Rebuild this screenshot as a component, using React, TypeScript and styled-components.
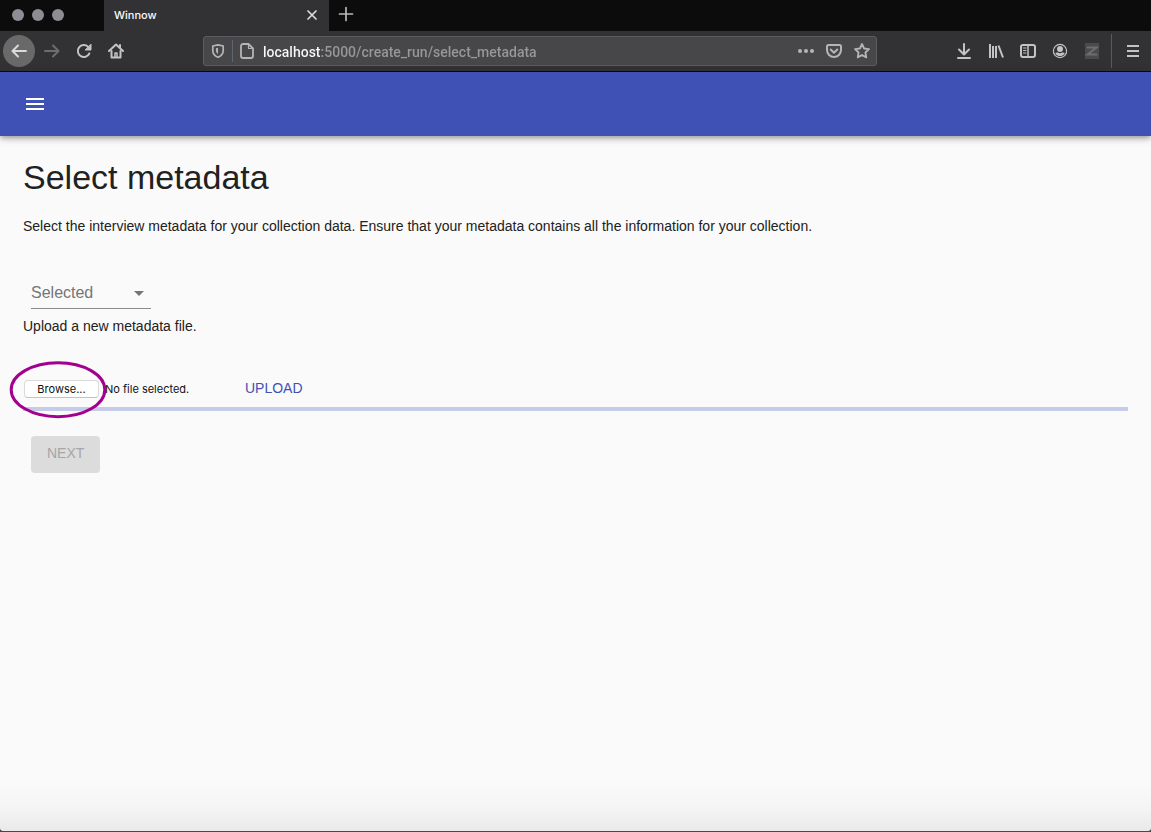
import React, { useRef, useState } from "react";
import styled, { createGlobalStyle } from "styled-components";

const uiFont = `Inter, "Liberation Sans", sans-serif`;
const pageFont = `"Liberation Sans", Arial, sans-serif`;

const GlobalStyle = createGlobalStyle`
  *, *::before, *::after { box-sizing: border-box; }
  body { margin: 0; background: #3a3935; font-family: ${pageFont}; }
  button, input, select { font: inherit; }
  button { border: 0; padding: 0; background: none; color: inherit; cursor: pointer; }
`;

const Window = styled.div`
  min-height: 100vh;
  display: flex;
  flex-direction: column;
  border-bottom: 1px solid #4a4845;
`;

const TabStrip = styled.header`
  display: flex;
  height: 31px;
  background: #0c0c0d;
  color: #f9f9fa;
  font-family: ${uiFont};
`;

const WindowControls = styled.div`
  display: flex;
  align-items: center;
  gap: 8px;
  width: 104px;
  padding: 0 0 2px 12px;
`;

const ControlDot = styled.button`
  width: 12px;
  height: 12px;
  border-radius: 50%;
  background: #8f8d93;
`;

const Tab = styled.div`
  display: flex;
  align-items: center;
  justify-content: space-between;
  width: 225px;
  padding: 0 9px 2px 10px;
  background: #323234;
  font-size: 11px;
  font-weight: 500;
`;

const TabButton = styled.button`
  display: flex;
  align-items: center;
  justify-content: center;
  width: 16px;
  color: #dcdcde;
`;

const NewTabButton = styled(TabButton)`
  width: 34px;
  padding-bottom: 3px;
  color: #b9b9bb;
`;

const Toolbar = styled.nav`
  display: flex;
  align-items: center;
  height: 41px;
  padding: 0 2px 0 3px;
  border-bottom: 1px solid #0c0c0d;
  background: #323234;
  color: #c3c3c5;
`;

const ToolGroup = styled.div`
  display: flex;
  align-items: center;
  flex: none;
`;

const ToolButton = styled.button<{ $dim?: boolean }>`
  display: flex;
  align-items: center;
  justify-content: center;
  width: 32px;
  height: 32px;
  color: ${(p) => (p.$dim ? "#6d6d6f" : "inherit")};
`;

const BackButton = styled(ToolButton)`
  margin-right: 1px;
  border-radius: 50%;
  background: #69696a;
  color: #dadadb;
`;

const AddressArea = styled.div`
  flex: 1;
  display: flex;
  padding: 0 71px;
`;

const AddressBar = styled.div`
  display: flex;
  align-items: center;
  width: 100%;
  height: 30px;
  border: 1px solid #5c5c5e;
  border-radius: 3px;
  background: #474749;
  color: #b5b5b7;
`;

const AddressButton = styled.button`
  display: flex;
  align-items: center;
  justify-content: center;
  flex: none;
  width: 28px;
  height: 24px;
`;

const AddressDivider = styled.span`
  width: 1px;
  height: 22px;
  background: #5f6672;
`;

/* The host part is painted brighter than the rest of the address. */
const AddressInput = styled.input`
  flex: 1;
  min-width: 0;
  height: 28px;
  margin: 0;
  padding: 2px 0 0 2px;
  border: 0;
  outline: 0;
  background: linear-gradient(to right, #f9f9fa 60px, #98989a 60px);
  background-clip: text;
  -webkit-background-clip: text;
  color: transparent;
  font-family: Roboto, ${uiFont};
  font-size: 14px;
  font-weight: 500;
`;

const MenuDivider = styled.span`
  width: 1px;
  height: 34px;
  margin: 0 5px 0 3px;
  background: #5a5a5c;
`;

const AppBar = styled.header`
  position: relative;
  display: flex;
  align-items: center;
  height: 64px;
  padding: 0 23px;
  background: #3f51b5;
  color: #fff;
  box-shadow: 0 2px 4px -1px rgba(0, 0, 0, 0.2), 0 4px 5px rgba(0, 0, 0, 0.14),
    0 1px 10px rgba(0, 0, 0, 0.12);
`;

const MenuButton = styled.button`
  display: flex;
`;

const Page = styled.main`
  flex: 1;
  display: flex;
  flex-direction: column;
  align-items: flex-start;
  padding: 20px 23px 40px;
  border-radius: 0 0 3px 3px;
  background: linear-gradient(to top, #e9e9e9, #f5f5f5 24px, #fafafa 48px);
  color: #212121;
  font-size: 14px;
  line-height: 20px;
`;

const Title = styled.h1`
  margin: 0 0 18px;
  font-size: 34px;
  font-weight: 400;
  line-height: 42px;
`;

const Text = styled.p`
  margin: 0;
`;

const SelectField = styled.div`
  position: relative;
  width: 120px;
  margin: 41px 8px 7px;
`;

const Select = styled.select`
  display: block;
  width: 100%;
  height: 32px;
  padding: 0 24px 0 0;
  border: 0;
  border-bottom: 1px solid #8c8c8c;
  border-radius: 0;
  outline: 0;
  background: none;
  appearance: none;
  color: #757575;
  font-size: 16px;
`;

const SelectArrow = styled.svg`
  position: absolute;
  top: 4px;
  right: 0;
  pointer-events: none;
  color: #757575;
`;

const UploadForm = styled.form`
  display: flex;
  align-items: center;
  height: 36px;
  margin-top: 34px;
  color: #111;
  font-family: ${uiFont};
  font-size: 11px;
`;

const BrowseWrap = styled.div`
  position: relative;
  display: flex;
  padding: 2px 6px 0 1px;
`;

const BrowseButton = styled.button`
  width: 75px;
  height: 18px;
  border: 1px solid #dadada;
  border-bottom-color: #c2c2c2;
  border-radius: 4px;
  background: #fff;
  line-height: 16px;
`;

const Ring = styled.svg`
  position: absolute;
  z-index: 1;
  top: -18px;
  left: -14px;
  pointer-events: none;
`;

const FileName = styled.output`
  width: 132px;
  padding-top: 2px;
`;

const TextButton = styled.button`
  height: 36px;
  padding: 0 8px;
  color: #3f51b5;
  font-family: ${pageFont};
  font-size: 14px;
  text-transform: uppercase;
`;

const Progress = styled.div`
  align-self: stretch;
  height: 4px;
  margin-top: 1px;
  background: #c5cbe9;
`;

const NextButton = styled.button`
  height: 37px;
  margin: 25px 8px 8px;
  padding: 0 16px 3px;
  border-radius: 4px;
  background: #dcdcdc;
  color: #a6a6a6;
  text-transform: uppercase;
`;

const Icon = ({ size = 16, width = 2, children }: { size?: number; width?: number; children: React.ReactNode }) => (
  <svg width={size} height={size} viewBox={`0 0 ${size} ${size}`} fill="none" stroke="currentColor"
    strokeWidth={width} strokeLinecap="round" strokeLinejoin="round" aria-hidden="true">
    {children}
  </svg>
);

function BrowserChrome() {
  const [url, setUrl] = useState("localhost:5000/create_run/select_metadata");
  return (
    <>
      <TabStrip>
        <WindowControls>
          <ControlDot aria-label="Close window" />
          <ControlDot aria-label="Minimise window" />
          <ControlDot aria-label="Zoom window" />
        </WindowControls>
        <Tab>
          <span>Winnow</span>
          <TabButton aria-label="Close tab">
            <Icon size={12} width={1.7}><path d="M2 2l8 8M10 2l-8 8" /></Icon>
          </TabButton>
        </Tab>
        <NewTabButton aria-label="New tab">
          <Icon width={1.7}><path d="M8 1.500v13M1.500 8h13" /></Icon>
        </NewTabButton>
      </TabStrip>
      <Toolbar aria-label="Browser">
        <ToolGroup>
          <BackButton aria-label="Back">
            <Icon><path d="M15 8H2M7 2.500L1.500 8L7 13.500" /></Icon>
          </BackButton>
          <ToolButton aria-label="Forward" $dim>
            <Icon><path d="M1 8h13M9 2.500L14.500 8L9 13.500" /></Icon>
          </ToolButton>
          <ToolButton aria-label="Reload">
            <Icon>
              <path d="M13.300 10.500A6 6 0 1 1 12 3.700" />
              <path d="M15 1.500v5.500h-5.500z" fill="currentColor" strokeWidth="1" />
            </Icon>
          </ToolButton>
          <ToolButton aria-label="Home">
            <Icon>
              <path d="M1 8L8 1.500L15 8M3.500 8v6.500h9V8M12 2v3" />
              <path d="M7 14v-4h2v4" strokeWidth="1.500" />
            </Icon>
          </ToolButton>
        </ToolGroup>
        <AddressArea>
          <AddressBar>
            <AddressButton aria-label="Tracking protection">
              <Icon width={1.7}>
                <path d="M8 1.800L13.200 3v4.500c0 3-2 5.500-5.200 6.700c-3.200-1.200-5.200-3.700-5.200-6.700V3z" />
                <path d="M8 4.800v6.200c-1.500-1-2.100-2.200-2.100-4V5.300z" fill="currentColor" stroke="none" />
              </Icon>
            </AddressButton>
            <AddressDivider />
            <AddressButton aria-label="Site information">
              <Icon width={1.8}>
                <path d="M9.500 1H4a2 2 0 0 0-2 2v10a2 2 0 0 0 2 2h8a2 2 0 0 0 2-2V5.500z" />
                <path d="M9.500 1.500v4h4" strokeWidth="1.200" />
              </Icon>
            </AddressButton>
            <AddressInput aria-label="Address" value={url} onChange={(e) => setUrl(e.target.value)} spellCheck={false} />
            <AddressButton aria-label="Page actions">
              <Icon>
                <g fill="currentColor" stroke="none">
                  <circle cx="2" cy="8" r="2" /><circle cx="8" cy="8" r="2" /><circle cx="14" cy="8" r="2" />
                </g>
              </Icon>
            </AddressButton>
            <AddressButton aria-label="Save to Pocket">
              <Icon>
                <path d="M2.500 2h11a1.500 1.500 0 0 1 1.500 1.500V7a7 7 0 0 1-14 0V3.500A1.500 1.500 0 0 1 2.500 2zM4.700 6.500L8 9.700l3.300-3.200" />
              </Icon>
            </AddressButton>
            <AddressButton aria-label="Bookmark">
              <Icon width={1.8}>
                <path d="M8 1l2.100 4.500 4.900.6-3.600 3.400.9 4.900L8 12l-4.300 2.400.9-4.900L1 6.100l4.900-.6z" />
              </Icon>
            </AddressButton>
          </AddressBar>
        </AddressArea>
        <ToolGroup>
          <ToolButton aria-label="Downloads">
            <Icon><path d="M8 1v10M3 6.500l5 5 5-5M2 15h12" /></Icon>
          </ToolButton>
          <ToolButton aria-label="Library">
            <Icon>
              <g strokeLinecap="butt">
                <path d="M2 1v14M5 3v12M8 3v12" />
                <path d="M10.500 2.500L15 14.500" />
              </g>
            </Icon>
          </ToolButton>
          <ToolButton aria-label="Sidebars">
            <Icon>
              <rect x="1" y="2" width="14" height="12" rx="2" />
              <path d="M8 2v12" strokeWidth="1.500" />
              <path d="M3.500 5h2.500M3.500 7.500h2.500M3.500 10h2.500" strokeWidth="1" />
            </Icon>
          </ToolButton>
          <ToolButton aria-label="Account">
            <Icon>
              <circle cx="8" cy="8" r="6.600" strokeWidth="1.200" />
              <g fill="currentColor" stroke="none">
                <circle cx="8" cy="6" r="3" />
                <path d="M3.300 10.200c.8-.9 1.700-.9 2.500-.6a4.500 4.500 0 0 0 4.400 0c.8-.3 1.700-.3 2.500.6c-.9 1.900-2.600 2.800-4.700 2.800s-3.800-.9-4.700-2.800z" />
              </g>
            </Icon>
          </ToolButton>
          <ToolButton aria-label="Zotero" $dim>
            <Icon>
              <rect x="1" y="0" width="14" height="16" fill="#4b4b4d" stroke="none" />
              <path d="M3.500 4.500h9L3.500 11.500h9" strokeLinejoin="miter" />
            </Icon>
          </ToolButton>
          <MenuDivider />
          <ToolButton aria-label="Open menu">
            <Icon><path d="M2 3h12M2 8h12M2 13h12" strokeLinecap="butt" /></Icon>
          </ToolButton>
        </ToolGroup>
      </Toolbar>
    </>
  );
}

export default function App() {
  const fileRef = useRef<HTMLInputElement>(null);
  const [fileName, setFileName] = useState("");

  return (
    <Window>
      <GlobalStyle />
      <BrowserChrome />
      <AppBar>
        <MenuButton aria-label="Open navigation">
          <svg width="24" height="24" viewBox="0 0 24 24" fill="currentColor" aria-hidden="true">
            <path d="M3 18h18v-2H3v2zm0-5h18v-2H3v2zm0-7v2h18V6H3z" />
          </svg>
        </MenuButton>
      </AppBar>
      <Page>
        <Title>Select metadata</Title>
        <Text>
          Select the interview metadata for your collection data. Ensure that your metadata contains all the
          information for your collection.
        </Text>
        <SelectField>
          <Select aria-label="Metadata file" defaultValue="">
            <option value="">Selected</option>
          </Select>
          <SelectArrow width="24" height="24" viewBox="0 0 24 24" fill="currentColor" aria-hidden="true">
            <path d="M7 10l5 5 5-5z" />
          </SelectArrow>
        </SelectField>
        <Text>Upload a new metadata file.</Text>
        <UploadForm onSubmit={(e) => e.preventDefault()}>
          <BrowseWrap>
            <BrowseButton type="button" onClick={() => fileRef.current?.click()}>Browse...</BrowseButton>
            <input ref={fileRef} type="file" hidden aria-label="Metadata file to upload"
              onChange={(e) => setFileName(e.target.files?.[0]?.name ?? "")} />
            <Ring width="98" height="60" viewBox="0 0 98 60" fill="none" aria-hidden="true">
              <ellipse cx="49" cy="29.700" rx="46.800" ry="27" stroke="#a3008f" strokeWidth="3" />
            </Ring>
          </BrowseWrap>
          <FileName>{fileName || "No file selected."}</FileName>
          <TextButton type="submit">Upload</TextButton>
        </UploadForm>
        <Progress role="progressbar" aria-label="Upload progress" />
        <NextButton disabled>Next</NextButton>
      </Page>
    </Window>
  );
}
